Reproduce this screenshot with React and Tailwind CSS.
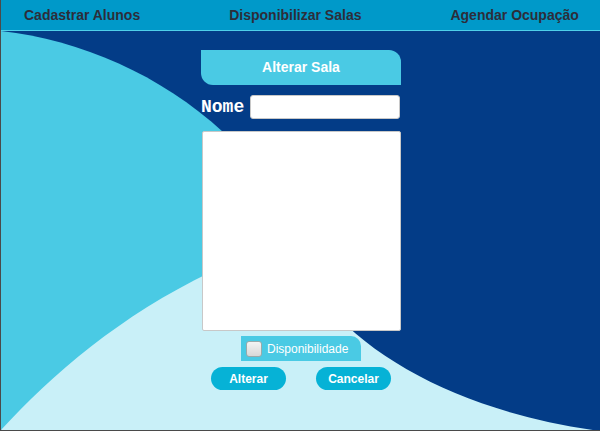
import React from 'react';

const Background = () => (
  <svg className="absolute inset-0 w-full h-full" viewBox="0 0 599 399" preserveAspectRatio="none">
    <rect x="0" y="0" width="599" height="399" fill="#033c87" />
    <path d="M0 0 C 80 9, 160 44, 222 101 L 260 280 L 0 399 Z" fill="#4acae4" />
    <path d="M0 399 C 50 344, 120 284, 210 241 L 300 231 L 330 279 C 385 339, 480 384, 599 400 L 0 400 Z" fill="#c9f0f8" />
  </svg>
);

export default function App() {
  return (
    <div
      className="w-[600px] h-[431px] border-l border-b border-[#4a4a4a] flex flex-col overflow-hidden"
      style={{ fontFamily: '"Liberation Sans", Arial, sans-serif' }}
    >
      {/* Nav */}
      <nav className="h-[31px] shrink-0 bg-[#0099c9] border-b border-[#4fd0ea] flex items-center text-[14px] font-bold text-[#2d2d3a]">
        <a className="ml-[23px]">Cadastrar Alunos</a>
        <a className="ml-[89px]">Disponibilizar Salas</a>
        <a className="ml-[89px]">Agendar Ocupação</a>
      </nav>

      <div className="relative flex-1">
        <Background />
        <div className="relative flex flex-col items-center pt-[19px] pl-[1px]">
          <div className="w-[200px]">
            {/* Title tab */}
            <div className="h-[35px] bg-[#4acae4] rounded-tr-[12px] rounded-bl-[12px] flex items-center justify-center text-white font-bold text-[14px]">
              Alterar Sala
            </div>

            {/* Nome */}
            <div className="flex items-center mt-[10px]">
              <label
                className="text-white font-bold text-[18px] leading-none w-[49px]"
                style={{ fontFamily: '"Liberation Mono", "Courier New", monospace' }}
              >
                Nome
              </label>
              <input className="w-[150px] h-[24px] bg-white border border-[#c8c8c8] rounded-[3px]" />
            </div>

            {/* Textarea */}
            <textarea className="block mt-[12px] ml-[1px] w-[199px] h-[200px] bg-white border border-[#c8c8c8] rounded-[2px] resize-none" />

            {/* Checkbox */}
            <div className="flex justify-center mt-[5px]">
              <div className="w-[120px] h-[25px] bg-[#4acae4] rounded-tr-[10px] flex items-center pl-[5px] gap-[5px] text-white text-[12px]">
                <span className="w-[16px] h-[16px] rounded-[3px] border border-[#9aa] bg-gradient-to-b from-[#f4f4f4] to-[#d8d8d8]" />
                Disponibilidade
              </div>
            </div>

            {/* Buttons */}
            <div className="flex justify-between px-[10px] mt-[6px]">
              <button className="w-[75px] h-[23px] rounded-full bg-[#06b2d6] text-white font-bold text-[12px]">
                Alterar
              </button>
              <button className="w-[75px] h-[23px] rounded-full bg-[#06b2d6] text-white font-bold text-[12px]">
                Cancelar
              </button>
            </div>
          </div>
        </div>
      </div>
    </div>
  );
}
